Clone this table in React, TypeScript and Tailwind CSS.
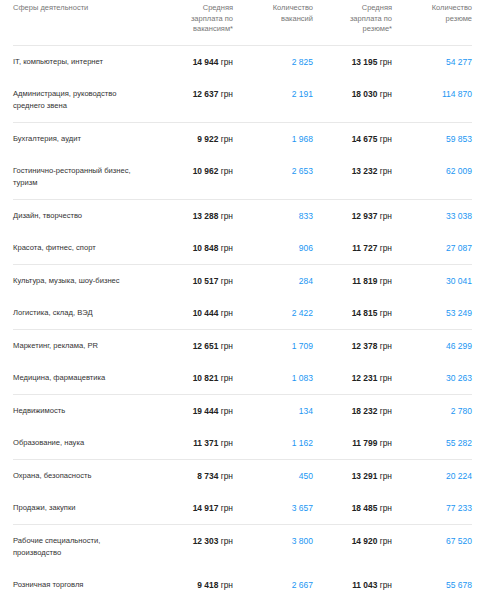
const rows: [string, string, string, string, string][] = [
  ["IT, компьютеры, интернет", "14 944", "2 825", "13 195", "54 277"],
  ["Администрация, руководство среднего звена", "12 637", "2 191", "18 030", "114 870"],
  ["Бухгалтерия, аудит", "9 922", "1 968", "14 675", "59 853"],
  ["Гостинично-ресторанный бизнес, туризм", "10 962", "2 653", "13 232", "62 009"],
  ["Дизайн, творчество", "13 288", "833", "12 937", "33 038"],
  ["Красота, фитнес, спорт", "10 848", "906", "11 727", "27 087"],
  ["Культура, музыка, шоу-бизнес", "10 517", "284", "11 819", "30 041"],
  ["Логистика, склад, ВЭД", "10 444", "2 422", "14 815", "53 249"],
  ["Маркетинг, реклама, PR", "12 651", "1 709", "12 378", "46 299"],
  ["Медицина, фармацевтика", "10 821", "1 083", "12 231", "30 263"],
  ["Недвижимость", "19 444", "134", "18 232", "2 780"],
  ["Образование, наука", "11 371", "1 162", "11 799", "55 282"],
  ["Охрана, безопасность", "8 734", "450", "13 291", "20 224"],
  ["Продажи, закупки", "14 917", "3 657", "18 485", "77 233"],
  ["Рабочие специальности, производство", "12 303", "3 800", "14 920", "67 520"],
  ["Розничная торговля", "9 418", "2 667", "11 043", "55 678"],
];

const cols = "grid grid-cols-[140px_80px_80px_79px_80px]";

function Salary({ v }: { v: string }) {
  return (
    <div className="text-right text-[8.4px] text-[#222]">
      <span className="font-bold">{v}</span> грн
    </div>
  );
}

function Row({ r, last }: { r: [string, string, string, string, string]; last: boolean }) {
  return (
    <div
      className={`${cols} pt-[10px] leading-[12px] ${last ? "border-b border-[#e8e8e8] pb-[9.5px]" : "pb-[10.5px]"}`}
    >
      <div className="pr-[4px] text-[7.6px] text-[#333]">{r[0]}</div>
      <Salary v={r[1]} />
      <div className="text-right text-[8.5px] text-[#2196f3]">{r[2]}</div>
      <Salary v={r[3]} />
      <div className="text-right text-[8.5px] text-[#2196f3]">{r[4]}</div>
    </div>
  );
}

export default function App() {
  return (
    <div className="min-h-[598px] bg-white pl-[13px] pr-[14px] font-['Liberation_Sans',Arial,sans-serif]">
      <div className={`${cols} border-b border-[#e8e8e8] pt-[3px] pb-[10px] text-[7.5px] leading-[10.5px] text-[#777]`}>
        <div>Сферы деятельности</div>
        <div className="flex justify-end"><div className="w-[56px] text-right">Средняя зарплата по вакансиям*</div></div>
        <div className="flex justify-end"><div className="w-[56px] text-right">Количество вакансий</div></div>
        <div className="flex justify-end"><div className="w-[56px] text-right">Средняя зарплата по резюме*</div></div>
        <div className="flex justify-end"><div className="w-[56px] text-right">Количество резюме</div></div>
      </div>
      {rows.map((r, i) => (
        <Row key={r[0]} r={r} last={i % 2 === 1} />
      ))}
    </div>
  );
}
